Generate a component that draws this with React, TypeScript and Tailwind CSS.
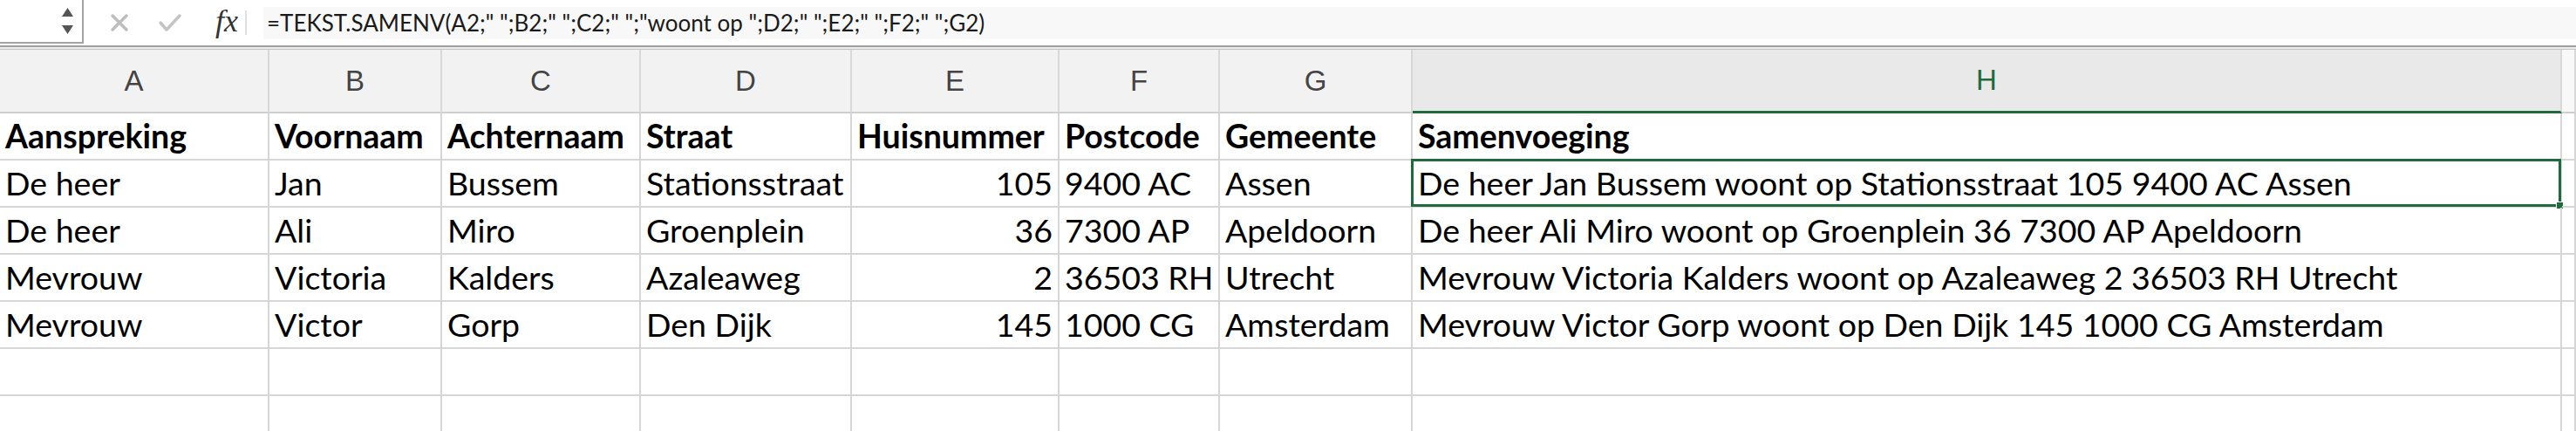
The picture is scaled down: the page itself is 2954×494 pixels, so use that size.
import React from 'react';

const columns = [
  { letter: 'A', align: 'left' },
  { letter: 'B', align: 'left' },
  { letter: 'C', align: 'left' },
  { letter: 'D', align: 'left' },
  { letter: 'E', align: 'right' },
  { letter: 'F', align: 'left' },
  { letter: 'G', align: 'left' },
  { letter: 'H', align: 'left' },
  { letter: '', align: 'left' },
];

const headings = ['Aanspreking', 'Voornaam', 'Achternaam', 'Straat', 'Huisnummer', 'Postcode', 'Gemeente', 'Samenvoeging', ''];

const rows = [
  ['De heer', 'Jan', 'Bussem', 'Stationsstraat', '105', '9400 AC', 'Assen'],
  ['De heer', 'Ali', 'Miro', 'Groenplein', '36', '7300 AP', 'Apeldoorn'],
  ['Mevrouw', 'Victoria', 'Kalders', 'Azaleaweg', '2', '36503 RH', 'Utrecht'],
  ['Mevrouw', 'Victor', 'Gorp', 'Den Dijk', '145', '1000 CG', 'Amsterdam'],
];

const formula = '=TEKST.SAMENV(A2;" ";B2;" ";C2;" ";"woont op ";D2;" ";E2;" ";F2;" ";G2)';

const gridCols = 'grid grid-cols-[309px_198px_228px_242px_238px_184px_221px_1318px_1fr]';

function Cell({ text, align, bold, selected }: { text: string; align: string; bold?: boolean; selected?: boolean }) {
  return (
    <div
      className={`relative h-[54px] border-r-2 border-b-2 border-[#d6d6d6] px-[6px] pb-[3px] flex items-end whitespace-nowrap ${
        selected ? 'overflow-visible' : 'overflow-hidden'
      } ${align === 'right' ? 'justify-end' : 'justify-start'}`}
    >
      <span className={`block leading-[46px] text-[37.5px] text-black font-[Lato,sans-serif] ${bold ? 'font-bold' : 'font-normal'}`}>
        {text}
      </span>
      {selected && (
        <div className="absolute -left-[2px] -top-[2px] right-[-1px] bottom-[-1px] border-[3px] border-[#1f6b3b] pointer-events-none">
          <div className="absolute -right-[6px] -bottom-[6px] w-[9px] h-[9px] bg-[#1f6b3b] border border-white" />
        </div>
      )}
    </div>
  );
}

export default function App() {
  return (
    <div className="w-[2954px] h-[494px] overflow-hidden bg-white">
      {/* formula bar */}
      <div className="h-[52px] flex items-stretch bg-white">
        <div className="w-[96px] h-[50px] border-r-2 border-b-2 border-[#a3a3a3] flex items-center justify-end pr-[10px]">
          <div className="flex flex-col gap-[10px]">
            <svg width="13" height="10" viewBox="0 0 13 10"><path d="M6.5 0 L13 10 L0 10 Z" fill="#555" /></svg>
            <svg width="13" height="10" viewBox="0 0 13 10"><path d="M0 0 L13 0 L6.5 10 Z" fill="#555" /></svg>
          </div>
        </div>
        <div className="w-[206px] flex items-center pl-[30px]">
          <svg width="22" height="22" viewBox="0 0 22 22">
            <path d="M3 3 L19 19 M19 3 L3 19" stroke="#bdbdbd" strokeWidth="3.5" strokeLinecap="round" />
          </svg>
          <svg width="28" height="22" viewBox="0 0 28 22" className="ml-[33px]">
            <path d="M3 11 L10 19 L25 3" stroke="#c4c4c4" strokeWidth="3.5" fill="none" strokeLinecap="round" strokeLinejoin="round" />
          </svg>
          <span className="ml-[38px] text-[36px] italic text-[#333] font-['Liberation_Serif',serif] leading-none -mt-[4px]">fx</span>
          <div className="ml-[8px] w-[2px] h-[28px] bg-[#e0e0e0]" />
        </div>
        <div className="flex-1 my-[8px] mb-[7px] bg-[#f8f8f8] flex items-center pl-[4px]">
          <span className="text-[26px] text-[#1a1a1a] font-[Lato,sans-serif] whitespace-pre">{formula}</span>
        </div>
      </div>
      <div className="h-[5px] border-t-2 border-b border-t-[#9e9e9e] border-b-[#c2c2c2] bg-[#ececec]" />

      {/* column headers */}
      <div className={gridCols}>
        {columns.map((c, i) => (
          <div
            key={i}
            className={`h-[73px] flex items-center justify-center border-r-2 ${
              c.letter === 'H'
                ? 'bg-[#e9e9e9] border-b-[3px] border-b-[#1f6b3b] border-r-[#d8d8d8] text-[#1f6b3b]'
                : c.letter === ''
                  ? 'bg-[#f8f8f8] border-b-2 border-b-[#cfcfcf] border-r-[#d8d8d8]'
                  : 'bg-[#f2f2f2] border-b-2 border-b-[#cfcfcf] border-r-[#d8d8d8] text-[#444]'
            } text-[33px] font-['Liberation_Sans',sans-serif]`}
          >
            {c.letter}
          </div>
        ))}
      </div>

      {/* sheet */}
      <div className={gridCols}>
        {headings.map((h, i) => (
          <Cell key={i} text={h} align="left" bold />
        ))}
        {rows.map((r, ri) => {
          const joined = `${r[0]} ${r[1]} ${r[2]} woont op ${r[3]} ${r[4]} ${r[5]} ${r[6]}`;
          const all = [...r, joined, ''];
          return all.map((v, ci) => (
            <Cell key={`${ri}-${ci}`} text={v} align={columns[ci].align} selected={ri === 0 && ci === 7} />
          ));
        })}
        {[0, 1].map((ri) =>
          columns.map((c, ci) => <Cell key={`e${ri}-${ci}`} text="" align={c.align} />)
        )}
      </div>
    </div>
  );
}
